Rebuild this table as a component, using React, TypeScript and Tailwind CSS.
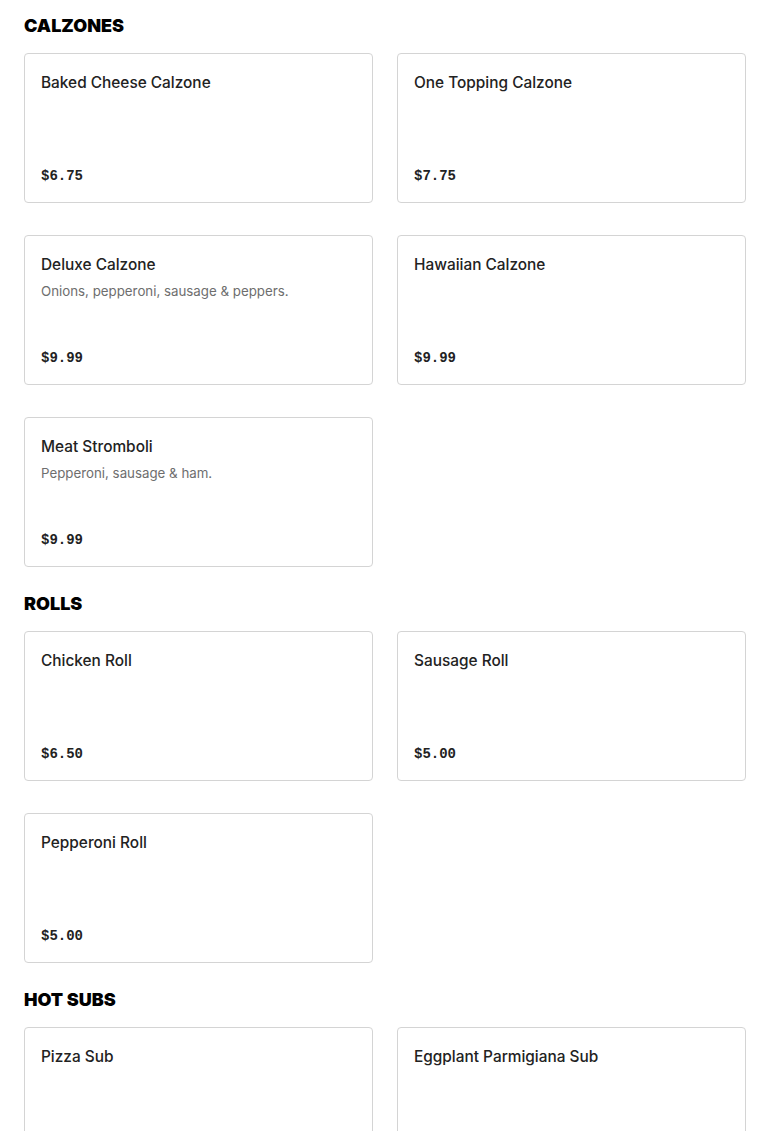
import React from 'react';

type Item = { name: string; desc?: string; price?: string };
type Section = { title: string; items: Item[] };

const sections: Section[] = [
  {
    title: 'CALZONES',
    items: [
      { name: 'Baked Cheese Calzone', price: '$6.75' },
      { name: 'One Topping Calzone', price: '$7.75' },
      { name: 'Deluxe Calzone', desc: 'Onions, pepperoni, sausage & peppers.', price: '$9.99' },
      { name: 'Hawaiian Calzone', price: '$9.99' },
      { name: 'Meat Stromboli', desc: 'Pepperoni, sausage & ham.', price: '$9.99' },
    ],
  },
  {
    title: 'ROLLS',
    items: [
      { name: 'Chicken Roll', price: '$6.50' },
      { name: 'Sausage Roll', price: '$5.00' },
      { name: 'Pepperoni Roll', price: '$5.00' },
    ],
  },
  {
    title: 'HOT SUBS',
    items: [
      { name: 'Pizza Sub', price: '$6.50' },
      { name: 'Eggplant Parmigiana Sub', price: '$7.50' },
    ],
  },
];

const MenuCard = ({ item }: { item: Item }) => (
  <div className="flex h-[150px] flex-col rounded-[4px] border border-[#d4d4d4] bg-white px-4 pt-[17px] pb-[15px]">
    <p className="text-[15.4px] leading-6 font-medium text-[#222]">{item.name}</p>
    {item.desc && (
      <p className="mt-1 text-[13.3px] leading-5 text-[#6e6e6e]">{item.desc}</p>
    )}
    <p className="mt-auto font-['Liberation_Mono',monospace] text-[14px] leading-[22px] font-bold text-[#222]">
      {item.price}
    </p>
  </div>
);

export default function App() {
  return (
    <div className="min-h-screen bg-white px-6 pt-[11px] font-['Inter',sans-serif]">
      {sections.map((section, i) => (
        <section key={section.title} className={i > 0 ? 'mt-[22px]' : ''}>
          {/* Section heading */}
          <h2 className="mb-[14px] flex h-7 items-center text-[18px] font-black text-black">
            {section.title}
          </h2>
          <div className="grid grid-cols-2 gap-x-6 gap-y-8">
            {section.items.map((item) => (
              <MenuCard key={item.name} item={item} />
            ))}
          </div>
        </section>
      ))}
    </div>
  );
}
